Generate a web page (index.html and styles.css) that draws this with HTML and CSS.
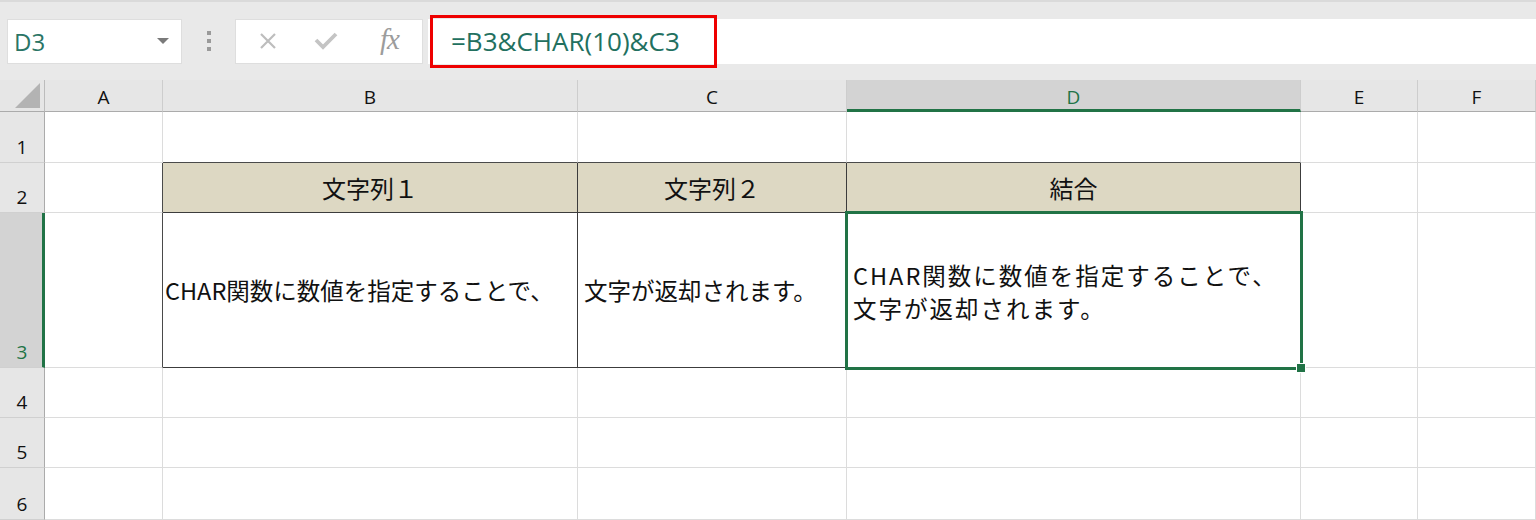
FILE: index.html
```html
<!DOCTYPE html>
<html lang="ja">
<head>
  <meta charset="UTF-8">
  <title>CHAR関数</title>
  <link rel="stylesheet" href="styles.css">
</head>
<body>
  <div class="formula-bar">
    <div class="name-box">
      <span class="name-text">D3</span>
      <span class="name-arrow"></span>
    </div>
    <div class="grip"><i></i><i></i><i></i></div>
    <div class="fx-box">
      <svg class="fx-icon" width="20" height="20" viewBox="0 0 20 20">
        <path d="M3 3 L17 17 M17 3 L3 17" stroke="#bdbdbd" stroke-width="2.2" fill="none"/>
      </svg>
      <svg class="fx-icon" width="24" height="20" viewBox="0 0 24 20">
        <path d="M2 9 L9 16 L22 3" stroke="#c4c4c4" stroke-width="3.8" fill="none"/>
      </svg>
      <span class="fx-label">fx</span>
    </div>
    <div class="formula-input">
      <div class="formula-mark">=B3&amp;CHAR(10)&amp;C3</div>
    </div>
  </div>

  <div class="sheet">
    <!-- header row -->
    <div class="corner"><span class="corner-tri"></span></div>
    <div class="col-head">A</div>
    <div class="col-head">B</div>
    <div class="col-head">C</div>
    <div class="col-head active">D</div>
    <div class="col-head">E</div>
    <div class="col-head">F</div>

    <!-- row 1 -->
    <div class="row-head">1</div>
    <div class="cell"></div>
    <div class="cell edge-b"></div>
    <div class="cell edge-b"></div>
    <div class="cell edge-b"></div>
    <div class="cell"></div>
    <div class="cell"></div>

    <!-- row 2 -->
    <div class="row-head">2</div>
    <div class="cell edge-r"></div>
    <div class="cell tbl head">文字列１</div>
    <div class="cell tbl head">文字列２</div>
    <div class="cell tbl head">結合</div>
    <div class="cell"></div>
    <div class="cell"></div>

    <!-- row 3 -->
    <div class="row-head active">3</div>
    <div class="cell edge-r"></div>
    <div class="cell tbl body">CHAR関数に数値を指定することで、</div>
    <div class="cell tbl body">文字が返却されます。</div>
    <div class="cell tbl body wrap sel">CHAR関数に数値を指定することで、<br>文字が返却されます。</div>
    <div class="cell"></div>
    <div class="cell"></div>

    <!-- rows 4-6 -->
    <div class="row-head">4</div>
    <div class="cell"></div>
    <div class="cell"></div>
    <div class="cell"></div>
    <div class="cell"></div>
    <div class="cell"></div>
    <div class="cell"></div>

    <div class="row-head">5</div>
    <div class="cell"></div>
    <div class="cell"></div>
    <div class="cell"></div>
    <div class="cell"></div>
    <div class="cell"></div>
    <div class="cell"></div>

    <div class="row-head">6</div>
    <div class="cell"></div>
    <div class="cell"></div>
    <div class="cell"></div>
    <div class="cell"></div>
    <div class="cell"></div>
    <div class="cell"></div>
  </div>
</body>
</html>
```

FILE: styles.css
```css
* {
  box-sizing: border-box;
}
body {
  margin: 0;
  width: 1536px;
  height: 520px;
  overflow: hidden;
  background-color: #e6e6e6;
  font-family: "Noto Sans CJK JP", "Noto Sans", sans-serif;
}
.formula-bar {
  height: 80px;
  display: flex;
  align-items: center;
  padding-left: 7px;
  border-top: 2px solid #dadada;
  background-color: #e9e9e9;
}
.name-box {
  width: 175px;
  height: 45px;
  background-color: white;
  border: 1px solid #dedede;
  display: flex;
  align-items: center;
  justify-content: space-between;
  padding: 0 12px 0 6px;
}
.name-text {
  font-family: "Open Sans", sans-serif;
  font-size: 24px;
  color: #2a7566;
}
.name-arrow {
  width: 0;
  height: 0;
  border-left: 6px solid transparent;
  border-right: 6px solid transparent;
  border-top: 6px solid #7a7a7a;
}
.grip {
  width: 53px;
  display: flex;
  flex-direction: column;
  align-items: center;
  gap: 4px;
}
.grip i {
  display: block;
  width: 4px;
  height: 4px;
  background-color: #9a9a9a;
}
.fx-box {
  width: 188px;
  height: 45px;
  background-color: white;
  border: 1px solid #dedede;
  display: flex;
  align-items: center;
  padding-left: 22px;
}
.fx-icon {
  margin-right: 36px;
}
.fx-box .fx-icon + .fx-icon {
  margin-right: 42px;
}
.fx-label {
  font-family: "Liberation Serif", serif;
  font-style: italic;
  font-size: 29px;
  color: #9c9c9c;
  letter-spacing: -1px;
  margin-top: -4px;
}
.formula-input {
  flex: 1;
  height: 45px;
  margin-left: 5px;
  background-color: white;
  display: flex;
  align-items: center;
}
.formula-mark {
  width: 287px;
  height: 53px;
  margin-left: 2px;
  border: 3px solid #ee0000;
  display: flex;
  align-items: center;
  padding-left: 18px;
  font-family: "Open Sans", sans-serif;
  font-size: 26px;
  color: #22705f;
}

.sheet {
  display: grid;
  grid-template-columns: 45px 118px 415px 269px 454px 117px 118px;
  grid-template-rows: 32px 51px 50px 155px 50px 50px 52px;
  background-color: white;
}
.corner {
  background-color: #e6e6e6;
  border-right: 1px solid #bcbcbc;
  border-bottom: 1px solid #ababab;
  position: relative;
}
.corner-tri {
  position: absolute;
  right: 4px;
  bottom: 3px;
  width: 0;
  height: 0;
  border-left: 25px solid transparent;
  border-bottom: 25px solid #b3b3b3;
}
.col-head {
  background-color: #e6e6e6;
  border-right: 1px solid #cdcdcd;
  border-bottom: 1px solid #ababab;
  display: flex;
  align-items: center;
  justify-content: center;
  font-family: "Open Sans", sans-serif;
  font-size: 19px;
  color: #111;
  padding-top: 2px;
}
.col-head.active {
  background-color: #d3d3d3;
  color: #217346;
  border-bottom: 3px solid #217346;
  padding-top: 4px;
}
.row-head {
  background-color: #e6e6e6;
  border-right: 1px solid #ababab;
  border-bottom: 1px solid #d0d0d0;
  display: flex;
  align-items: flex-end;
  justify-content: center;
  padding-bottom: 2px;
  font-family: "Open Sans", sans-serif;
  font-size: 19px;
  color: #111;
}
.row-head.active {
  background-color: #d3d3d3;
  color: #217346;
  border-right: 3px solid #217346;
  padding-left: 2px;
}
.cell {
  border-right: 1px solid #dcdcdc;
  border-bottom: 1px solid #dcdcdc;
  font-size: 23.5px;
  color: #111;
}
.cell.edge-b {
  border-bottom-color: #4a4a4a;
}
.cell.edge-r {
  border-right-color: #4a4a4a;
}
.cell.tbl {
  border-right-color: #3c3c3c;
  border-bottom-color: #3c3c3c;
  display: flex;
  align-items: center;
}
.cell.head {
  background-color: #ddd8c3;
  justify-content: center;
  font-size: 24px;
}
.cell.body {
  padding-left: 2px;
  white-space: nowrap;
}
.cell.body + .cell.body {
  padding-left: 6px;
}
.cell.wrap {
  line-height: 33px;
  letter-spacing: 2px;
  padding-left: 5px;
  padding-top: 4px;
}
.cell.sel {
  position: relative;
  z-index: 1;
  outline: 3px solid #217346;
  outline-offset: -1px;
}
.cell.sel::after {
  content: "";
  position: absolute;
  right: -6px;
  bottom: -6px;
  width: 8px;
  height: 8px;
  background-color: #217346;
  border: 1px solid white;
}
```
